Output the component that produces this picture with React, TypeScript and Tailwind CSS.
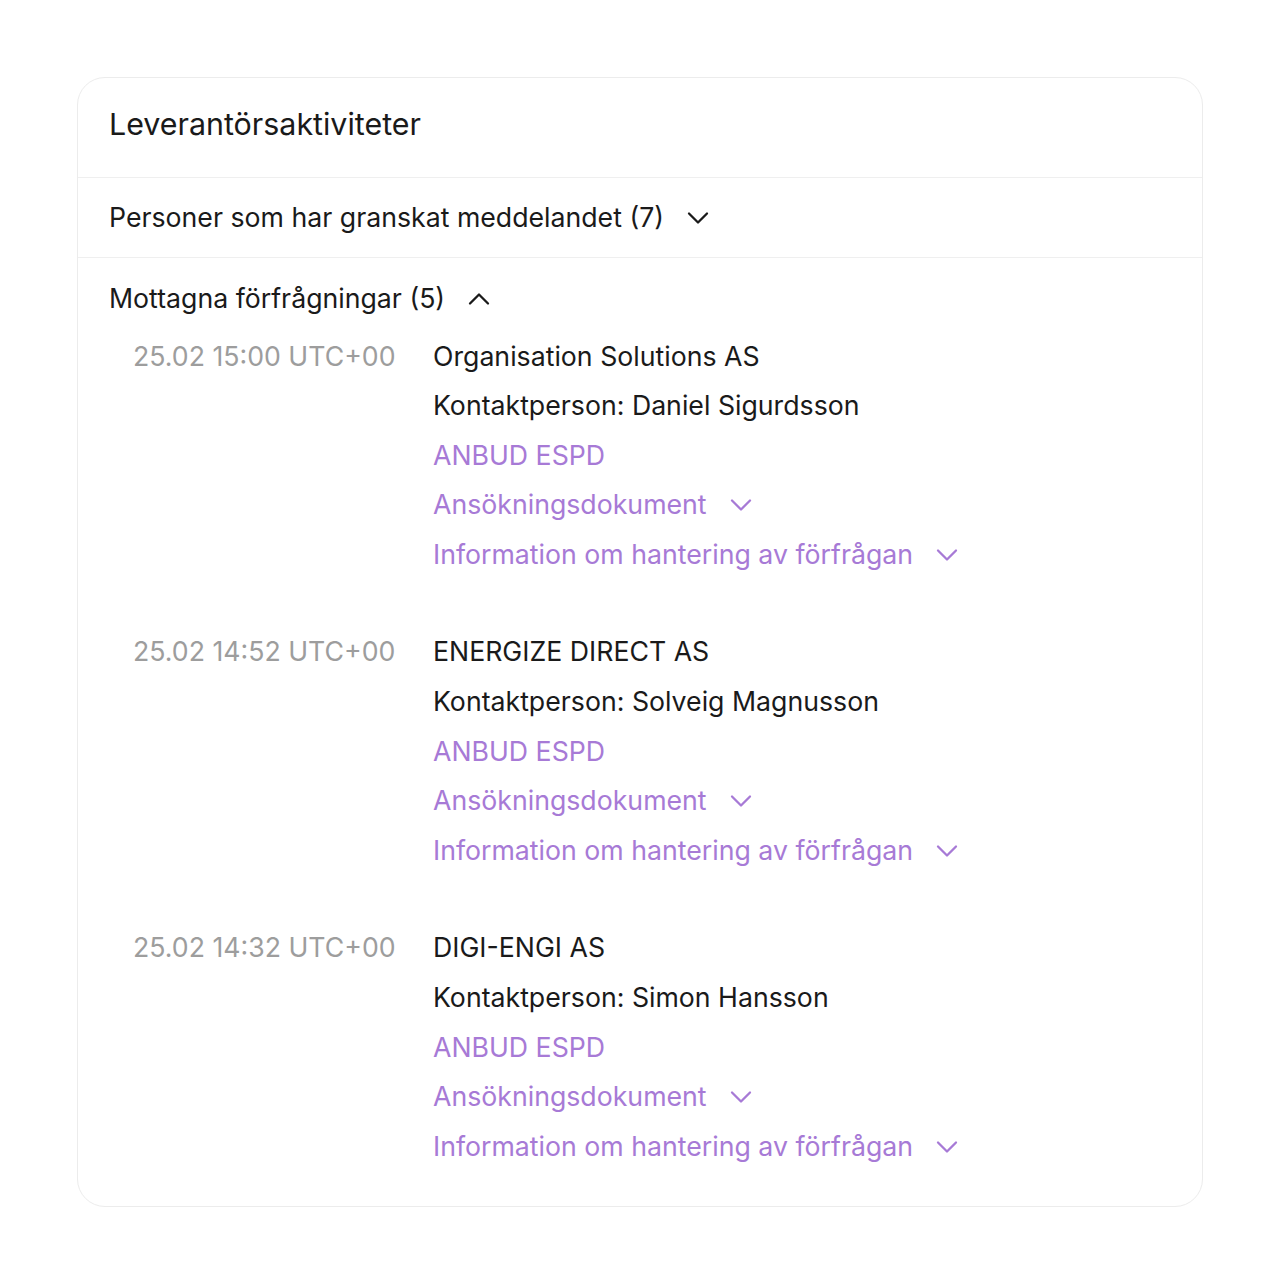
const Chevron = ({ up = false, className = '' }: { up?: boolean; className?: string }) => (
    <svg
        width="24"
        height="24"
        viewBox="0 0 24 24"
        fill="none"
        stroke="currentColor"
        strokeWidth="2.3"
        strokeLinecap="round"
        strokeLinejoin="round"
        className={className}
    >
        {up ? <path d="M3 16.5l9-9 9 9" /> : <path d="M3 7.5l9 9 9-9" />}
    </svg>
);

interface Request {
    time: string;
    company: string;
    contact: string;
}

const requests: Request[] = [
    { time: '25.02 15:00 UTC+00', company: 'Organisation Solutions AS', contact: 'Daniel Sigurdsson' },
    { time: '25.02 14:52 UTC+00', company: 'ENERGIZE DIRECT AS', contact: 'Solveig Magnusson' },
    { time: '25.02 14:32 UTC+00', company: 'DIGI-ENGI AS', contact: 'Simon Hansson' },
];

export default function App() {
    return (
        <div className="min-h-screen bg-white pt-[77px] px-[77px] font-['Inter',sans-serif] text-[#1a1a1a]">
            <div className="w-[1126px] rounded-[28px] border-[1.5px] border-[#ececec] bg-white">
                <div className="h-[100px] flex items-center px-[31px] pb-[6px] border-b-[1.5px] border-[#efefef]">
                    <h2 className="text-[30.4px]">Leverantörsaktiviteter</h2>
                </div>
                <div className="h-[80px] flex items-center px-[31px] border-b-[1.5px] border-[#efefef]">
                    <span className="text-[26.7px]">Personer som har granskat meddelandet (7)</span>
                    <Chevron className="ml-[22px] text-[#1a1a1a]" />
                </div>
                <div className="px-[31px] pt-[16px] pb-[35px]">
                    <div className="flex items-center h-[49px]">
                        <span className="text-[26.7px]">Mottagna förfrågningar (5)</span>
                        <Chevron up className="ml-[22px] text-[#1a1a1a]" />
                    </div>
                    <div className="mt-[8.5px] flex flex-col gap-[48px]">
                        {requests.map((r) => (
                            <div key={r.time} className="flex text-[26.7px] leading-[49.6px]">
                                <div className="w-[324px] pl-[24px] text-[#9d9d9d] shrink-0">{r.time}</div>
                                <div className="flex flex-col">
                                    <span>{r.company}</span>
                                    <span>Kontaktperson: {r.contact}</span>
                                    <span className="text-[#a77ad6]">ANBUD ESPD</span>
                                    <span className="flex items-center text-[#a77ad6]">
                                        Ansökningsdokument
                                        <Chevron className="ml-[22px]" />
                                    </span>
                                    <span className="flex items-center text-[#a77ad6]">
                                        Information om hantering av förfrågan
                                        <Chevron className="ml-[22px]" />
                                    </span>
                                </div>
                            </div>
                        ))}
                    </div>
                </div>
            </div>
        </div>
    );
}
